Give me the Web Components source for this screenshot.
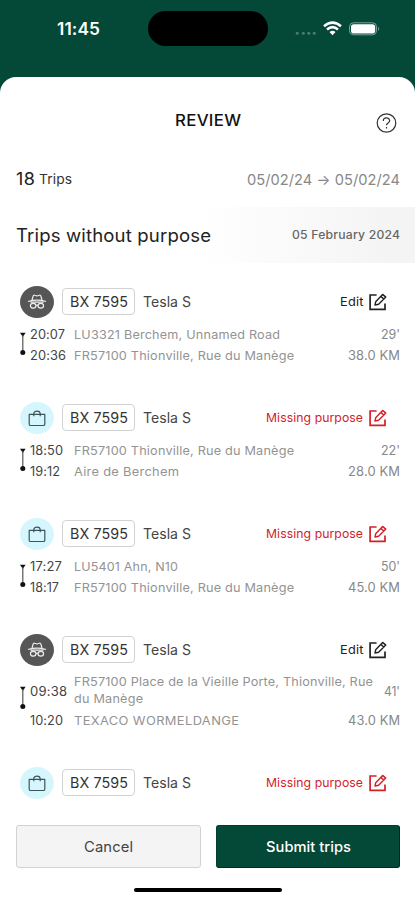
<!DOCTYPE html>
<html lang="en">
<head>
<meta charset="utf-8">
<title>Review trips</title>
<style>
html,body{margin:0;padding:0;width:415px;height:900px;overflow:hidden;background:#044838;font-family:Inter,"Liberation Sans",sans-serif;}
</style>
</head>
<body>
<review-screen></review-screen>
<script>
const define = (name, html, setup) => customElements.define(name, class extends HTMLElement {
  connectedCallback() {
    if (this.shadowRoot) return;
    const root = this.attachShadow({mode: 'open'});
    root.innerHTML = typeof html === 'function' ? html(this) : html;
    if (setup) setup(this, root);
  }
});

// Text widened to the width given in "w": mostly by stretching, the rest by tracking.
define('tracked-text', `<style>:host{display:inline-block;white-space:nowrap;flex:none}span{display:inline-block;transform-origin:0 50%}</style><span><slot></slot></span>`, (el, root) => {
  const span = root.querySelector('span');
  const w = +el.getAttribute('w');
  const n = el.textContent.length;
  const natural = span.getBoundingClientRect().width;
  const sx = 1 + (w / natural - 1) * 0.65;
  const ls = (w / sx - natural) / (n - 1);
  el.style.width = w + 'px';
  span.style.letterSpacing = ls.toFixed(3) + 'px';
  span.style.transform = `scaleX(${sx.toFixed(4)})`;
});

const icons = {
  help: `<svg width="21" height="20" viewBox="0 0 21 20" fill="none" stroke="#333" stroke-width="1.2"><ellipse cx="10.5" cy="10" rx="9.3" ry="9.2"/><path d="M7.3 7.9C7.3 4 13.7 4 13.7 7.8C13.7 10 10.5 9.9 10.5 12.3"/><path d="M10.5 14V15.5"/></svg>`,
  edit: `<svg width="18" height="18" viewBox="0 0 18 18" fill="none" stroke="currentColor" stroke-width="1.7"><path d="M7.6 2H1.1V16.4H16V10.5"/><path d="M6 12L6.7 8.7L13.6 1.4L16.8 4.1L9.6 11.3ZM11.8 3.4L14.8 6" stroke-width="1.4" stroke-linejoin="round"/></svg>`,
  bag: `<svg width="18" height="17" viewBox="0 0 18 17" fill="none" stroke="#3c5458" stroke-width="1.2" stroke-linejoin="round"><path d="M1.2 4.4H16.8V14.2Q16.8 15.5 15.3 15.5H2.7Q1.2 15.5 1.2 14.2Z"/><path d="M5.8 6.3V3.8C5.8.1 12.2.1 12.2 3.8V6.3"/></svg>`,
  spy: `<svg width="20" height="16" viewBox="0 0 20 16" fill="none" stroke="#eee" stroke-width="1.2" stroke-linejoin="round"><path d="M5 6L6.2 1.9Q6.6.8 7.8 1.3L10 2L12.2 1.3Q13.4.8 13.8 1.9L15 6M1 7.5Q10 4.6 19 7.5M3.5 8.2H16.5"/><ellipse cx="6.2" cy="11.8" rx="2.8" ry="2.4"/><ellipse cx="13.8" cy="11.8" rx="2.8" ry="2.4"/><path d="M9 11.6Q10 10.7 11 11.6"/></svg>`
};
define('ui-icon', el => `<style>:host{display:block;flex:none}svg{display:block}</style>${icons[el.getAttribute('name')]}`);

define('status-bar', `<style>
:host{display:grid;grid-template-columns:148px 120px 147px;height:77px;box-sizing:border-box;padding-top:11px;color:#fff}
.time{height:35px;display:flex;align-items:center;justify-content:flex-end;padding-right:48px;font-size:17px;font-weight:600}
.island{height:35px;border-radius:18px;background:#000}
.right{height:35px;display:flex;align-items:center;padding-left:27px}
svg{display:block}
</style><div class="time"><tracked-text w="43">11:45</tracked-text></div><div class="island"></div>
<div class="right"><svg width="90" height="18" viewBox="0 0 90 18"><g fill="#4a7d70"><circle cx="2.3" cy="13.3" r="1.5"/><circle cx="8.3" cy="13.3" r="1.5"/><circle cx="13.8" cy="13.3" r="1.5"/><circle cx="19.2" cy="13.3" r="1.5"/></g>
<g fill="none" stroke="#fff" stroke-width="2.5"><path d="M29 6.2Q37.5-1 46 6.2"/><path d="M32 9.5Q37.5 4.8 43 9.5"/></g><path d="M34.5 12Q37.5 9.5 40.5 12L37.5 15.3Z" fill="#fff"/>
<rect x="54.5" y="2.8" width="27" height="12" rx="4" fill="none" stroke="#7da398"/><rect x="56" y="4.2" width="24.2" height="9.3" rx="2.8" fill="#fff"/><path d="M83.1 6.7Q85.3 8.7 83.1 10.9Z" fill="#7da398"/></svg></div>`);

define('review-header', `<style>
:host{display:grid;grid-template-columns:1fr auto 1fr;align-items:center;height:86px;padding:0 18px 0 19px;color:#111;font-size:16px;font-weight:500}
ui-icon{justify-self:end;padding-top:5px}
</style><span></span><tracked-text w="66">REVIEW</tracked-text><ui-icon name="help"></ui-icon>`);

define('trip-summary', `<style>
:host{display:flex;align-items:center;box-sizing:border-box;height:34px;padding:0 15px 2px 16px;color:#333}
.n{font-size:17px;margin-right:4px;color:#222}.t{font-size:13.5px}.d{margin-left:auto;font-size:14.5px;color:#888}
</style><tracked-text class="n" w="19">18</tracked-text><tracked-text class="t" w="33">Trips</tracked-text><tracked-text class="d" w="153">05/02/24 → 05/02/24</tracked-text>`);

define('section-band', `<style>
:host{display:flex;align-items:center;justify-content:space-between;box-sizing:border-box;height:56px;margin-top:10px;padding:0 15px 0 16px;background:linear-gradient(90deg,#fff 48%,#f4f4f4 95%)}
.t{font-size:18px;color:#222}.d{font-size:11.5px;font-weight:500;color:#666}
</style><tracked-text class="t" w="195">Trips without purpose</tracked-text><tracked-text class="d" w="108">05 February 2024</tracked-text>`);

define('trip-entry', el => {
  const a = n => el.getAttribute(n);
  const priv = el.hasAttribute('private');
  const stop = (time, tw, place, fig, fw) => `<div class="stop"><tracked-text class="time" w="${tw}">${time}</tracked-text><div class="place">${place.split('|').map(p => { const [t, w] = p.split('@'); return `<tracked-text w="${w}">${t}</tracked-text>`; }).join('')}</div><tracked-text class="fig" w="${fw}">${fig}</tracked-text></div>`;
  return `<style>
:host{display:block;margin-bottom:36px}
.head{display:flex;align-items:center;height:32px;padding:0 28px 0 20px;color:#444}
.head tracked-text{padding-bottom:1px}
.badge{width:34px;height:32px;border-radius:50%;display:grid;place-items:center;background:${priv ? '#565656' : '#d5f6fd'}}
.plate{box-sizing:border-box;width:73px;height:27px;margin:0 8px 1px 8px;border:1px solid #d2d2d2;border-radius:4px;display:grid;place-items:center;font-size:14px;color:#333}
.car{font-size:14px}
.action{margin-left:auto;display:flex;align-items:center;gap:6px;font-size:12px;color:${priv ? '#222' : '#d32027'}}
.body{display:grid;grid-template-columns:14px 1fr;padding:6px 15px 0 16px}
.line{padding-top:${el.hasAttribute('tall') ? 14 : 8}px}.line svg{display:block;margin-left:2px}
.stop{display:grid;grid-template-columns:44px 1fr auto;align-items:center;min-height:21px;font-size:12px;color:#939393}
.time{font-size:12.5px;color:#444}
.place{display:flex;flex-direction:column}.place tracked-text{line-height:17px}
.place:has(:nth-child(2)){padding:1px 0 3px}
.fig{font-size:12.5px;color:#888}
</style>
<div class="head"><div class="badge"><ui-icon name="${priv ? 'spy' : 'bag'}"></ui-icon></div><div class="plate"><tracked-text w="58">BX 7595</tracked-text></div><tracked-text class="car" w="48">Tesla S</tracked-text>
<div class="action"><tracked-text w="${priv ? 23.5 : 97}">${priv ? 'Edit' : 'Missing purpose'}</tracked-text><ui-icon name="edit"></ui-icon></div></div>
${a('t1') ? `<div class="body"><div class="line"><svg width="10" height="24" viewBox="0 0 10 24"><path d="M2 .8H7.6L4.8 5Z" fill="#111"/><path d="M4.8 3V20" stroke="#555" stroke-width="1.2"/><circle cx="4.8" cy="20.4" r="2.5" fill="#111"/></svg></div>
<div>${stop(a('t1'), a('w1'), a('p1'), a('mins'), a('mw'))}${stop(a('t2'), a('w2'), a('p2'), a('km'), 52)}</div></div>` : ''}`;
});

define('action-button', el => `<style>
:host{display:grid;place-items:center;box-sizing:border-box;height:43px;padding-bottom:1px;border-radius:3px;font-size:14.5px;border:1px solid #d2d2d2;background:#f4f4f4;color:#444}
:host([primary]){background:#044838;border-color:#033d2f #022a20 #022a20 #033d2f;color:#fff;font-weight:500}
</style><tracked-text w="${el.getAttribute('w')}">${el.textContent}</tracked-text>`);

define('review-screen', `<style>
:host{display:flex;flex-direction:column;width:415px;height:900px;background:#044838}
.sheet{flex:1;min-height:0;display:flex;flex-direction:column;background:#fff;border-radius:16px 16px 0 0}
.list{flex:1;min-height:0;padding-top:23px;overflow:hidden}
.buttons{display:grid;grid-template-columns:185px 184px;gap:15px;padding:0 15px 0 16px}
.home{width:148px;height:4px;border-radius:2px;background:#000;margin:20px auto 8px 134px}
</style>
<status-bar></status-bar>
<div class="sheet">
<review-header></review-header><trip-summary></trip-summary><section-band></section-band>
<div class="list">
<trip-entry private t1="20:07" w1="35" p1="LU3321 Berchem, Unnamed Road@206" mins="29'" mw="19" t2="20:36" w2="36" p2="FR57100 Thionville, Rue du Manège@220" km="38.0 KM"></trip-entry>
<trip-entry t1="18:50" w1="33" p1="FR57100 Thionville, Rue du Manège@220" mins="22'" mw="19" t2="19:12" w2="30" p2="Aire de Berchem@105" km="28.0 KM"></trip-entry>
<trip-entry t1="17:27" w1="32" p1="LU5401 Ahn, N10@104" mins="50'" mw="19" t2="18:17" w2="29" p2="FR57100 Thionville, Rue du Manège@220" km="45.0 KM"></trip-entry>
<trip-entry private tall t1="09:38" w1="37" p1="FR57100 Place de la Vieille Porte, Thionville, Rue@299|du Manège@69" mins="41'" mw="16" t2="10:20" w2="33" p2="TEXACO WORMELDANGE@165" km="43.0 KM"></trip-entry>
<trip-entry></trip-entry>
</div>
<div class="buttons"><action-button w="49">Cancel</action-button><action-button primary w="85">Submit trips</action-button></div>
<div class="home"></div>
</div>`);
</script>
</body>
</html>
